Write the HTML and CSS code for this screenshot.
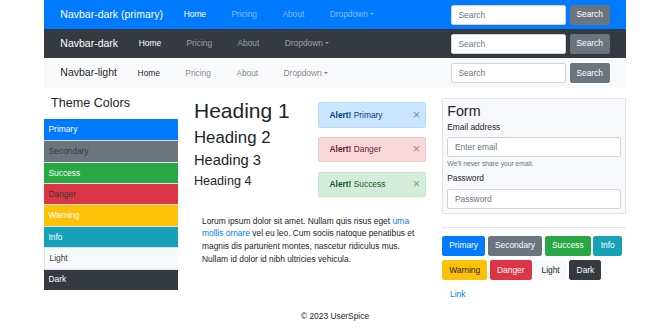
FILE: index.html
```html
<!DOCTYPE html>
<html lang="en">
<head>
    <meta charset="UTF-8">
    <meta name="viewport" content="width=device-width, initial-scale=1.0">
    <title>Theme Preview</title>
    <link rel="stylesheet" href="styles.css">
</head>
<body>
    <div class="page">
        <nav class="navbar navbar-primary">
            <a class="brand" href="#">Navbar-dark (primary)</a>
            <ul class="nav">
                <li><a class="active" href="#">Home</a></li>
                <li><a href="#">Pricing</a></li>
                <li><a href="#">About</a></li>
                <li><a class="dropdown" href="#">Dropdown</a></li>
            </ul>
            <form class="search">
                <input type="text" placeholder="Search">
                <button type="button" class="btn btn-secondary">Search</button>
            </form>
        </nav>
        <nav class="navbar navbar-dark">
            <a class="brand" href="#">Navbar-dark</a>
            <ul class="nav">
                <li><a class="active" href="#">Home</a></li>
                <li><a href="#">Pricing</a></li>
                <li><a href="#">About</a></li>
                <li><a class="dropdown" href="#">Dropdown</a></li>
            </ul>
            <form class="search">
                <input type="text" placeholder="Search">
                <button type="button" class="btn btn-secondary">Search</button>
            </form>
        </nav>
        <nav class="navbar navbar-light">
            <a class="brand" href="#">Navbar-light</a>
            <ul class="nav">
                <li><a class="active" href="#">Home</a></li>
                <li><a href="#">Pricing</a></li>
                <li><a href="#">About</a></li>
                <li><a class="dropdown" href="#">Dropdown</a></li>
            </ul>
            <form class="search">
                <input type="text" placeholder="Search">
                <button type="button" class="btn btn-secondary">Search</button>
            </form>
        </nav>

        <div class="main">
            <aside class="sidebar">
                <h4 class="sidebar-title">Theme Colors</h4>
                <div class="list">
                    <div class="list-item bg-primary">Primary</div>
                    <div class="list-item bg-secondary">Secondary</div>
                    <div class="list-item bg-success">Success</div>
                    <div class="list-item bg-danger">Danger</div>
                    <div class="list-item bg-warning">Warning</div>
                    <div class="list-item bg-info">Info</div>
                    <div class="list-item bg-light">Light</div>
                    <div class="list-item bg-dark">Dark</div>
                </div>
            </aside>

            <section class="content">
                <div class="content-row">
                    <div class="headings">
                        <h1>Heading 1</h1>
                        <h2>Heading 2</h2>
                        <h3>Heading 3</h3>
                        <h4>Heading 4</h4>
                    </div>
                    <div class="alerts">
                        <div class="alert alert-primary"><span><strong>Alert!</strong> Primary</span><span class="close">&times;</span></div>
                        <div class="alert alert-danger"><span><strong>Alert!</strong> Danger</span><span class="close">&times;</span></div>
                        <div class="alert alert-success"><span><strong>Alert!</strong> Success</span><span class="close">&times;</span></div>
                    </div>
                </div>
                <div class="text-block">
                    <p>Lorum ipsum dolor sit amet. Nullam quis risus eget <a href="#">urna mollis ornare</a> vel eu leo. Cum sociis natoque penatibus et magnis dis parturient montes, nascetur ridiculus mus. Nullam id dolor id nibh ultricies vehicula.</p>
                </div>
            </section>

            <section class="side-form">
                <form class="card">
                    <h3>Form</h3>
                    <div class="form-group">
                        <label>Email address</label>
                        <input type="email" placeholder="Enter email">
                        <small>We'll never share your email.</small>
                    </div>
                    <div class="form-group">
                        <label>Password</label>
                        <input type="password" placeholder="Password">
                    </div>
                </form>
                <hr>
                <div class="buttons">
                    <button class="btn btn-primary">Primary</button>
                    <button class="btn btn-secondary">Secondary</button>
                    <button class="btn btn-success">Success</button>
                    <button class="btn btn-info">Info</button>
                    <button class="btn btn-warning">Warning</button>
                    <button class="btn btn-danger">Danger</button>
                    <button class="btn btn-light">Light</button>
                    <button class="btn btn-dark">Dark</button>
                    <button class="btn btn-link">Link</button>
                </div>
            </section>
        </div>

        <footer class="footer">&copy; 2023 UserSpice</footer>
    </div>
</body>
</html>
```

FILE: styles.css
```css
body {
    margin: 0;
    font-family: "Liberation Sans", Arial, sans-serif;
    font-size: 8.4px;
    line-height: 1.5;
    color: #212529;
    background-color: #fff;
}

a {
    color: #007bff;
    text-decoration: none;
}

.page {
    width: 582px;
    margin: 0 auto;
}

/* navbars */

.navbar {
    display: flex;
    align-items: center;
    height: 29.2px;
    padding: 0 16.3px;
    box-sizing: border-box;
}

.brand {
    font-size: 10.5px;
    margin-right: 8px;
    white-space: nowrap;
}

.nav {
    display: flex;
    list-style: none;
    margin: 0;
    padding: 0;
}

.nav a {
    display: block;
    padding: 0 12.7px;
}

.dropdown::after {
    content: "";
    display: inline-block;
    margin-left: 2.2px;
    vertical-align: 2px;
    border-top: 2.5px solid;
    border-left: 2.5px solid transparent;
    border-right: 2.5px solid transparent;
}

.search {
    display: flex;
    margin-left: auto;
}

.search input {
    width: 115px;
    margin-right: 4px;
}

.search .btn {
    width: 40px;
    padding: 0;
}

.navbar-primary {
    background-color: #007bff;
}

.navbar-dark {
    background-color: #343a40;
}

.navbar-primary .brand,
.navbar-dark .brand,
.navbar-primary .nav a.active,
.navbar-dark .nav a.active {
    color: #fff;
}

.navbar-primary .nav a,
.navbar-dark .nav a {
    color: rgba(255, 255, 255, 0.5);
}

.navbar-light {
    background-color: #f8f9fa;
}

.navbar-light .brand,
.navbar-light .nav a.active {
    color: rgba(0, 0, 0, 0.9);
}

.navbar-light .nav a {
    color: rgba(0, 0, 0, 0.5);
}

/* inputs */

input {
    display: block;
    height: 20px;
    box-sizing: border-box;
    padding: 0 6.8px;
    border: 1px solid #ced4da;
    border-radius: 2.1px;
    font-family: inherit;
    font-size: 8.4px;
    color: #495057;
    background-color: #fff;
}

input::placeholder {
    color: #6c757d;
}

/* layout */

.main {
    display: grid;
    grid-template-columns: 134px 248px 184px;
    column-gap: 8px;
    align-items: start;
}

/* sidebar */

.sidebar-title {
    margin: 0;
    padding: 8.4px 7px 7.8px;
    font-size: 12.6px;
    font-weight: normal;
    line-height: 1.2;
}

.list-item {
    display: flex;
    align-items: center;
    height: 21.4px;
    padding: 0 4.5px;
    box-sizing: border-box;
    color: #fff;
}

.list-item + .list-item {
    border-top: 1px solid #dee2e6;
}

.bg-primary { background-color: #007bff; }
.bg-secondary { background-color: #6c757d; color: #343a40; }
.bg-success { background-color: #28a745; }
.bg-danger { background-color: #dc3545; color: #343a40; }
.bg-warning { background-color: #ffc107; }
.bg-info { background-color: #17a2b8; }
.bg-light { background-color: #f8f9fa; color: #343a40; }
.bg-dark { background-color: #343a40; }

.bg-light {
    border-left: 1px solid #dee2e6;
}

/* middle column */

.content {
    padding: 10.7px 8px 0;
}

.content-row {
    display: grid;
    grid-template-columns: 1fr 1fr;
    column-gap: 16px;
}

.headings h1,
.headings h2,
.headings h3,
.headings h4 {
    margin: 0 0 4.2px;
    font-weight: normal;
    line-height: 1.2;
}

.headings h1 { font-size: 21px; }
.headings h2 { font-size: 16.8px; }
.headings h3 { font-size: 14.7px; }
.headings h4 { font-size: 12.6px; }

.alerts {
    padding-top: 3.9px;
}

.alert {
    display: flex;
    justify-content: space-between;
    align-items: center;
    padding: 5.4px 5px 5.4px 10.5px;
    margin-bottom: 9.3px;
    border: 1px solid transparent;
    border-radius: 2.1px;
}

.close {
    font-size: 12.6px;
    line-height: 1;
    opacity: 0.5;
}

.alert-primary {
    color: #004085;
    background-color: #cce5ff;
    border-color: #b8daff;
}

.alert-danger {
    color: #721c24;
    background-color: #f8d7da;
    border-color: #f5c6cb;
}

.alert-success {
    color: #155724;
    background-color: #d4edda;
    border-color: #c3e6cb;
}

.text-block {
    padding: 8.5px 8px;
}

.text-block p {
    margin: 0;
}

/* form column */

.side-form {
    padding-top: 10.6px;
}

.card {
    margin: 0;
    padding: 4.2px;
    background-color: #f8f9fa;
    border: 1px solid #dee2e6;
    border-radius: 1px;
}

.card h3 {
    margin: 0;
    font-size: 14.3px;
    font-weight: normal;
    line-height: 1.2;
}

.card label {
    display: block;
    margin-bottom: 3.9px;
}

.card input {
    width: 100%;
}

.card small {
    display: block;
    margin-top: 2.1px;
    font-size: 6.72px;
    color: #6c757d;
}

.form-group {
    margin-bottom: 3.3px;
}

.form-group:last-child {
    margin-bottom: 0;
}

hr {
    margin: 13px 0 7.6px;
    border: 0;
    border-top: 1px solid #e2e4e6;
}

/* buttons */

.buttons {
    display: flex;
    flex-wrap: wrap;
    gap: 4.3px 2.6px;
}

.btn {
    height: 20px;
    padding: 0 6.2px;
    border: 1px solid transparent;
    border-radius: 2.1px;
    font-family: inherit;
    font-size: 8.4px;
    line-height: 1.5;
    color: #fff;
    cursor: pointer;
}

.btn-primary { background-color: #007bff; border-color: #007bff; }
.btn-secondary { background-color: #6c757d; border-color: #6c757d; }
.btn-success { background-color: #28a745; border-color: #28a745; }
.btn-info { background-color: #17a2b8; border-color: #17a2b8; }
.btn-warning { background-color: #ffc107; border-color: #ffc107; color: #212529; }
.btn-danger { background-color: #dc3545; border-color: #dc3545; }
.btn-light { background-color: #f8f9fa; border-color: #f8f9fa; color: #212529; }
.btn-dark { background-color: #343a40; border-color: #343a40; }

.btn-link {
    background: none;
    color: #007bff;
    padding-left: 7px;
}

/* footer */

.footer {
    padding-top: 5.7px;
    text-align: center;
}
```
